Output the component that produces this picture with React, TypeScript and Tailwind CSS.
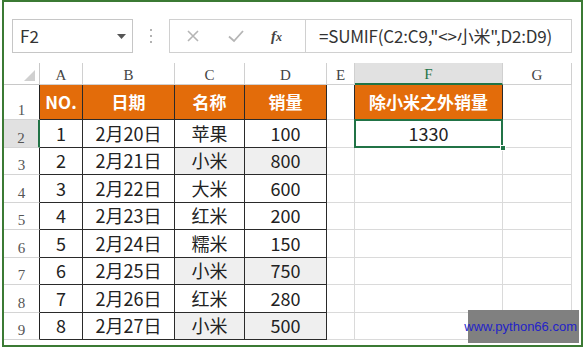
import React from "react";

const COLS = ["A", "B", "C", "D", "E", "F", "G"];

type Row = { no: string; date: string; name: string; qty: string; hi?: boolean };

const rows: Row[] = [
  { no: "1", date: "2月20日", name: "苹果", qty: "100" },
  { no: "2", date: "2月21日", name: "小米", qty: "800", hi: true },
  { no: "3", date: "2月22日", name: "大米", qty: "600" },
  { no: "4", date: "2月23日", name: "红米", qty: "200" },
  { no: "5", date: "2月24日", name: "糯米", qty: "150" },
  { no: "6", date: "2月25日", name: "小米", qty: "750", hi: true },
  { no: "7", date: "2月26日", name: "红米", qty: "280" },
  { no: "8", date: "2月27日", name: "小米", qty: "500", hi: true },
];

const cjk = "font-['Noto_Sans_CJK_SC',sans-serif]";
const serif = "font-['Liberation_Serif','DejaVu_Serif',serif]";

function RowHead({ n }: { n: number }) {
  const sel = n === 2;
  return (
    <div
      className={
        sel
          ? `flex items-end justify-center border-b border-r-2 border-b-[#d4d4d4] border-r-[#217346] bg-[#e1e1e1] pb-[1px] text-[15px] leading-none text-[#555] ${serif}`
          : `flex items-end justify-center border-b border-r border-b-[#d4d4d4] border-r-[#222] pb-[1px] text-[15px] leading-none text-[#555] ${serif}`
      }
    >
      {n}
    </div>
  );
}

function Cell({
  children,
  gray,
  head,
}: {
  children?: React.ReactNode;
  gray?: boolean;
  head?: boolean;
}) {
  if (head) {
    return (
      <div
        className={`flex items-center justify-center border-b border-r border-[#2a2a2a] bg-[#e36c0a] text-[17px] font-bold text-white ${cjk}`}
      >
        {children}
      </div>
    );
  }
  return (
    <div
      className={
        gray
          ? `flex items-center justify-center border-b border-r border-[#2a2a2a] bg-[#efefef] text-[18px] text-[#222] ${cjk}`
          : `flex items-center justify-center border-b border-r border-[#2a2a2a] bg-white text-[18px] text-[#222] ${cjk}`
      }
    >
      {children}
    </div>
  );
}

function Grid() {
  return <div className="border-b border-r border-[#dadada] bg-white" />;
}

export default function App() {
  return (
    <div className="h-[349px] w-[585px] bg-white pl-[2px]">
      <div className="relative h-[347px] w-[581px] border-2 border-[#3b7a34] bg-white">
        {/* formula bar */}
        <div className="ml-[8px] mt-[17px] flex h-[34px] items-stretch">
          <div className="flex w-[121px] items-center justify-between border border-[#c6c6c6] pl-[7px] pr-[6px]">
            <span className={`text-[17px] text-[#333] ${cjk}`}>F2</span>
            <svg width="9" height="5" viewBox="0 0 9 5">
              <polygon points="0,0 9,0 4.5,5" fill="#555" />
            </svg>
          </div>
          <div className="flex w-[36px] flex-col items-center justify-center gap-[4px]">
            <span className="h-[2px] w-[2px] rounded-full bg-[#999]" />
            <span className="h-[2px] w-[2px] rounded-full bg-[#999]" />
            <span className="h-[2px] w-[2px] rounded-full bg-[#999]" />
          </div>
          <div className="flex w-[136px] items-center border border-r-0 border-[#d0d0d0] pl-[16px]">
            <svg width="14" height="14" viewBox="0 0 14 14">
              <path d="M2 2 L12 12 M12 2 L2 12" stroke="#b5b5b5" strokeWidth="1.6" />
            </svg>
            <svg className="ml-[28px]" width="16" height="14" viewBox="0 0 16 14">
              <path d="M1 7.5 L6 12 L15 2" stroke="#b5b5b5" strokeWidth="1.8" fill="none" />
            </svg>
            <span className={`ml-[27px] text-[15px] font-bold italic text-[#444] ${serif}`}>
              f<span className="text-[12px]">x</span>
            </span>
          </div>
          <div className="flex w-[267px] items-center border border-[#d0d0d0] pl-[13px]">
            <span className={`text-[17px] tracking-[-0.2px] text-[#333] ${cjk}`}>
              =SUMIF(C2:C9,"&lt;&gt;小米",D2:D9)
            </span>
          </div>
        </div>

        {/* sheet */}
        <div className="mt-[10px] grid grid-cols-[36px_43px_92px_70px_82px_28px_148px_69px] grid-rows-[22px_35px_repeat(8,27.5px)]">
          <div className="flex items-end justify-end border-b border-r border-[#c8c8c8] pb-[3px] pr-[4px]">
            <svg width="11" height="11" viewBox="0 0 11 11">
              <polygon points="11,0 11,11 0,11" fill="#d0d0d0" />
            </svg>
          </div>
          {COLS.map((c) =>
            c === "F" ? (
              <div
                key={c}
                className={`flex items-center justify-center border-b-2 border-r border-b-[#217346] border-r-[#d0d0d0] bg-[#e1e1e1] pt-[3px] text-[15px] leading-none text-[#217346] ${serif}`}
              >
                {c}
              </div>
            ) : (
              <div
                key={c}
                className={`flex items-center justify-center border-b border-r border-[#d0d0d0] pt-[3px] text-[15px] leading-none text-[#444] ${serif}`}
              >
                {c}
              </div>
            )
          )}

          {/* row 1 */}
          <RowHead n={1} />
          <Cell head>NO.</Cell>
          <Cell head>日期</Cell>
          <Cell head>名称</Cell>
          <Cell head>销量</Cell>
          <div className="border-b border-r border-b-[#dadada] border-r-[#2a2a2a]" />
          <Cell head>除小米之外销量</Cell>
          <Grid />

          {rows.map((r, i) => (
            <React.Fragment key={r.no}>
              <RowHead n={i + 2} />
              <Cell>{r.no}</Cell>
              <Cell>{r.date}</Cell>
              <Cell gray={r.hi}>{r.name}</Cell>
              <Cell gray={r.hi}>{r.qty}</Cell>
              <Grid />
              {i === 0 ? (
                <div className="relative border-b border-r border-[#dadada]">
                  <div
                    className={`absolute -left-[1px] -top-[1px] bottom-[-1px] right-[-1px] flex items-center justify-center border-2 border-[#217346] text-[18px] text-[#222] ${cjk}`}
                  >
                    1330
                  </div>
                  <div className="absolute -bottom-[4px] -right-[4px] h-[6px] w-[6px] border border-white bg-[#217346]" />
                </div>
              ) : (
                <Grid />
              )}
              <Grid />
            </React.Fragment>
          ))}
        </div>

        {/* watermark */}
        <div className="absolute left-[464px] top-[308px] flex h-[33px] w-[111px] items-center justify-end bg-[#808080] pr-[2px]">
          <span className="font-['Liberation_Sans',sans-serif] text-[13px] text-[#2323c8]">
            www.python66.com
          </span>
        </div>
      </div>
    </div>
  );
}
